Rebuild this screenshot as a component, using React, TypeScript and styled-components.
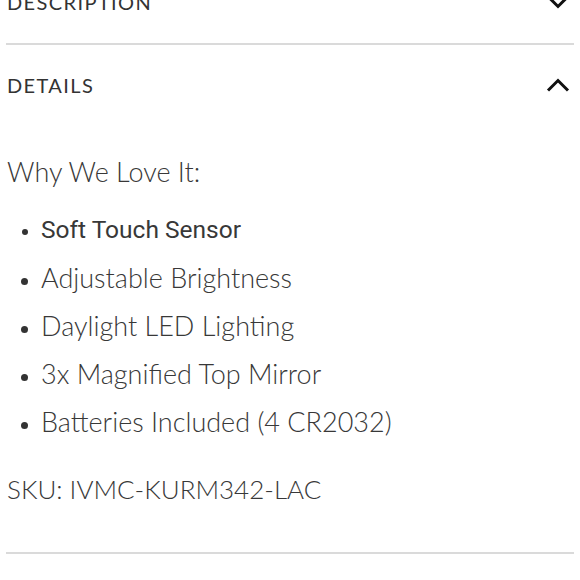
import styled, { createGlobalStyle } from 'styled-components'

const GlobalStyle = createGlobalStyle`
  html, body {
    margin: 0;
    padding: 0;
    background: #ffffff;
  }
  body {
    width: 580px;
    height: 580px;
    overflow: hidden;
    font-family: Lato, "Open Sans", sans-serif;
    color: #3a3a3a;
  }
`

const Page = styled.div`
  display: flex;
  flex-direction: column;
  padding: 0 6px;
  margin-top: -18px;
`

const Section = styled.section`
  border-bottom: 2px solid #dadada;
`

const Header = styled.div<{ $top?: number; $bottom?: number }>`
  display: flex;
  align-items: center;
  justify-content: space-between;
  height: 40px;
  padding: ${(p) => p.$top ?? 0}px 4px ${(p) => p.$bottom ?? 0}px 1px;
`

const Title = styled.h3`
  margin: 0;
  font-size: 20px;
  font-weight: 400;
  letter-spacing: 1.4px;
  text-transform: uppercase;
  color: #333;
`

const Chevron = ({ up }: { up?: boolean }) => (
  <svg width="24" height="14" viewBox="0 0 24 14">
    <path
      d={up ? 'M2 12.5 L12 2.5 L22 12.5' : 'M2 1.5 L12 11.5 L22 1.5'}
      fill="none"
      stroke="#111"
      strokeWidth="3"
    />
  </svg>
)

const Body = styled.div`
  padding: 43px 1px 39px;
  font-size: 27px;
  font-weight: 300;
  color: #383838;
`

const Lead = styled.p`
  margin: 0 0 10px;
  line-height: 48px;
`

const List = styled.ul`
  margin: 0;
  padding: 0 0 0 34px;
`

const Item = styled.li<{ $alt?: boolean }>`
  line-height: 48px;
  font-family: ${(p) => (p.$alt ? 'Roboto, sans-serif' : 'inherit')};
  font-size: ${(p) => (p.$alt ? 24.5 : 27)}px;
  font-weight: ${(p) => (p.$alt ? 400 : 300)};
  color: ${(p) => (p.$alt ? '#383838' : 'inherit')};
  &::marker {
    font-size: 20px;
    color: #333;
  }
`

const Sku = styled.p`
  margin: 19px 0 0;
  font-size: 26px;
  line-height: 48px;
`

const items = [
  'Adjustable Brightness',
  'Daylight LED Lighting',
  '3x Magnified Top Mirror',
  'Batteries Included (4 CR2032)',
]

const App = () => {
  return (
    <Page>
      <GlobalStyle />
      <Section>
        <Header $bottom={21}>
          <Title>Description</Title>
          <Chevron />
        </Header>
      </Section>
      <Section>
        <Header $top={20}>
          <Title>Details</Title>
          <Chevron up />
        </Header>
        <Body>
          <Lead>Why We Love It:</Lead>
          <List>
            <Item $alt>Soft Touch Sensor</Item>
            {items.map((t) => (
              <Item key={t}>{t}</Item>
            ))}
          </List>
          <Sku>SKU: IVMC-KURM342-LAC</Sku>
        </Body>
      </Section>
    </Page>
  )
}

export default App
